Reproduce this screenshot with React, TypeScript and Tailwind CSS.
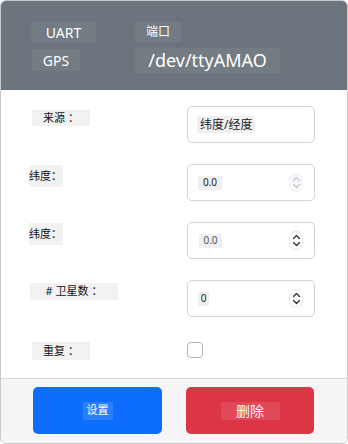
import React from 'react';

const font = { fontFamily: '"Noto Sans", "Noto Sans CJK SC", sans-serif' };

function Spinner({ faint }: { faint?: boolean }) {
  return (
    <div
      className={`ml-auto mr-[11px] flex h-[19px] w-[14px] flex-col items-center justify-center rounded-full border ${
        faint ? 'border-gray-200 bg-gray-100 opacity-60' : 'border-gray-200 bg-white'
      }`}
    >
      <svg width="9" height="15" viewBox="0 0 9 15" fill="none" stroke={faint ? '#9ca3af' : '#333'} strokeWidth="1.4" strokeLinecap="round" strokeLinejoin="round">
        <path d="M1.5 5.5 L4.5 2.5 L7.5 5.5" />
        <path d="M1.5 9.5 L4.5 12.5 L7.5 9.5" />
      </svg>
    </div>
  );
}

function Row({ label, labelCls, children }: { label: string; labelCls: string; children: React.ReactNode }) {
  return (
    <div className="flex h-[37px] items-start">
      <div className="w-[186px] shrink-0">
        <div className={`flex items-center justify-center whitespace-nowrap bg-[#f2f2f2] text-[11px] text-[#111] ${labelCls}`}>{label}</div>
      </div>
      {children}
    </div>
  );
}

export default function App() {
  return (
    <div className="h-[444px] w-[348px] bg-white" style={font}>
      <div className="flex h-[444px] flex-col overflow-hidden rounded-md border border-[#c8c8c8] bg-white">
        <div className="flex h-[89px] shrink-0 bg-[#6c757d] pl-[30px] pt-[21px] text-white">
          <div className="flex w-[104px] flex-col">
            <div className="flex h-[21px] w-[65px] items-center justify-center bg-[#737b83] text-[14px]">UART</div>
            <div className="mt-[6px] ml-[1px] flex h-[22px] w-[48px] items-center justify-center bg-[#737b83] text-[14px]">GPS</div>
          </div>
          <div className="flex flex-col">
            <div className="flex h-[20px] w-[46px] items-center justify-center bg-[#737b83] text-[12px]">端口</div>
            <div className="mt-[6px] flex h-[25px] w-[145px] items-center justify-center bg-[#737b83] text-[18px]">/dev/ttyAMAO</div>
          </div>
        </div>

        <div className="flex flex-1 flex-col gap-[21px] pt-[16px]">
          <Row label="来源 ：" labelCls="ml-[31px] mt-[4px] h-[16px] w-[58px]">
            <div className="flex h-[37px] w-[128px] items-center rounded-[5px] border border-[#ced4da] pl-[9px]">
              <div className="flex h-[17px] items-center bg-[#f0f0f0] px-[3px] text-[12px] text-[#222]">纬度/经度</div>
            </div>
          </Row>
          <Row label="纬度：" labelCls="ml-[28px] mt-[1px] h-[22px] w-[34px] justify-start">
            <div className="flex h-[37px] w-[128px] items-center rounded-[5px] border border-[#ced4da] pl-[10px]">
              <div className="flex h-[14px] w-[24px] items-center justify-center bg-[#f0f0f0] text-[10px] text-[#222]">0.0</div>
              <Spinner faint />
            </div>
          </Row>
          <Row label="纬度：" labelCls="ml-[28px] mt-[1px] h-[22px] w-[34px] justify-start">
            <div className="flex h-[37px] w-[128px] items-center rounded-[5px] border border-[#ced4da] pl-[11px]">
              <div className="flex h-[14px] w-[23px] items-center justify-center bg-[#f0f0f0] text-[10px] text-[#555]">0.0</div>
              <Spinner />
            </div>
          </Row>
          <Row label="# 卫星数 ：" labelCls="ml-[29px] mt-[3px] h-[17px] w-[88px]">
            <div className="flex h-[37px] w-[128px] items-center rounded-[5px] border border-[#ced4da] pl-[10px]">
              <div className="flex h-[14px] w-[11px] items-center justify-center bg-[#f0f0f0] text-[10px] text-[#222]">0</div>
              <Spinner />
            </div>
          </Row>
          <Row label="重复 ：" labelCls="ml-[31px] mt-[4px] h-[18px] w-[58px]">
            <div className="mt-[4px] h-[16px] w-[16px] rounded-[4px] border border-[#adb5bd] bg-white" />
          </Row>
        </div>

        <div className="flex h-[65px] shrink-0 gap-[24px] border-t border-[#d8d8d8] bg-[#f5f5f5] pl-[32px] pt-[8px]">
          <div className="flex h-[47px] w-[129px] items-center justify-center rounded-[5px] bg-[#0d6efd]">
            <div className="flex h-[18px] items-center bg-[#2b7ffd] px-[4px] text-[11px] text-white">设置</div>
          </div>
          <div className="flex h-[47px] w-[128px] items-center justify-center rounded-[5px] bg-[#dc3545]">
            <div className="flex h-[18px] w-[59px] items-center justify-center bg-[#e04a58] text-[14px] text-white">删除</div>
          </div>
        </div>
      </div>
    </div>
  );
}
